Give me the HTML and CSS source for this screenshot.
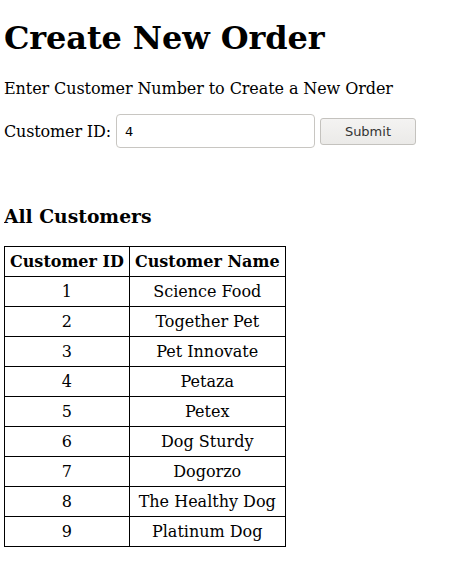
FILE: index.html
```html
<!DOCTYPE html>
<html>
<head>
<meta charset="utf-8">
<link rel="stylesheet" href="styles.css">
</head>
<body class="page">
<h1 class="title">Create New Order</h1>
<p class="intro">Enter Customer Number to Create a New Order</p>
<form class="order-form">
  <label class="field-label" for="cid">Customer ID:</label>
  <input class="field-input" id="cid" type="text" value="4">
  <button class="submit-btn" type="button">Submit</button>
</form>
<h3 class="section-title">All Customers</h3>
<table class="customers">
  <thead>
    <tr><th>Customer ID</th><th>Customer Name</th></tr>
  </thead>
  <tbody>
    <tr><td>1</td><td>Science Food</td></tr>
    <tr><td>2</td><td>Together Pet</td></tr>
    <tr><td>3</td><td>Pet Innovate</td></tr>
    <tr><td>4</td><td>Petaza</td></tr>
    <tr><td>5</td><td>Petex</td></tr>
    <tr><td>6</td><td>Dog Sturdy</td></tr>
    <tr><td>7</td><td>Dogorzo</td></tr>
    <tr><td>8</td><td>The Healthy Dog</td></tr>
    <tr><td>9</td><td>Platinum Dog</td></tr>
  </tbody>
</table>
</body>
</html>
```
FILE: styles.css
```css
.page {
  margin: 4px;
  font-family: "DejaVu Serif", serif;
  font-size: 16px;
  color: #000;
  background: #fff;
}
.title {
  font-size: 32px;
  font-weight: bold;
  letter-spacing: -0.12px;
  margin: 15px 0 22px;
}
.intro {
  margin: 16px 0;
  letter-spacing: -0.09px;
}
.order-form {
  display: flex;
  align-items: center;
  margin: 0 0 57px;
}
.field-label {
  margin-right: 5px;
  letter-spacing: -0.15px;
}
.field-input {
  width: 199px;
  height: 34px;
  box-sizing: border-box;
  border: 1px solid #c8c6c2;
  border-radius: 4px;
  padding: 0 8px;
  font-family: "DejaVu Sans", sans-serif;
  font-size: 13px;
  color: #000;
  margin: 0 5px 0 0;
}
.submit-btn {
  width: 96px;
  height: 27px;
  box-sizing: border-box;
  border: 1px solid #c4c2be;
  border-radius: 3px;
  background: linear-gradient(#f4f3f2, #ebeae8);
  font-family: "DejaVu Sans", sans-serif;
  font-size: 13px;
  color: #333;
  padding: 0;
}
.section-title {
  font-size: 18.72px;
  margin: 18px 0 19px;
}
.customers {
  border-collapse: collapse;
}
.customers th,
.customers td {
  border: 1px solid #000;
  padding: 5px;
  text-align: center;
}
```
